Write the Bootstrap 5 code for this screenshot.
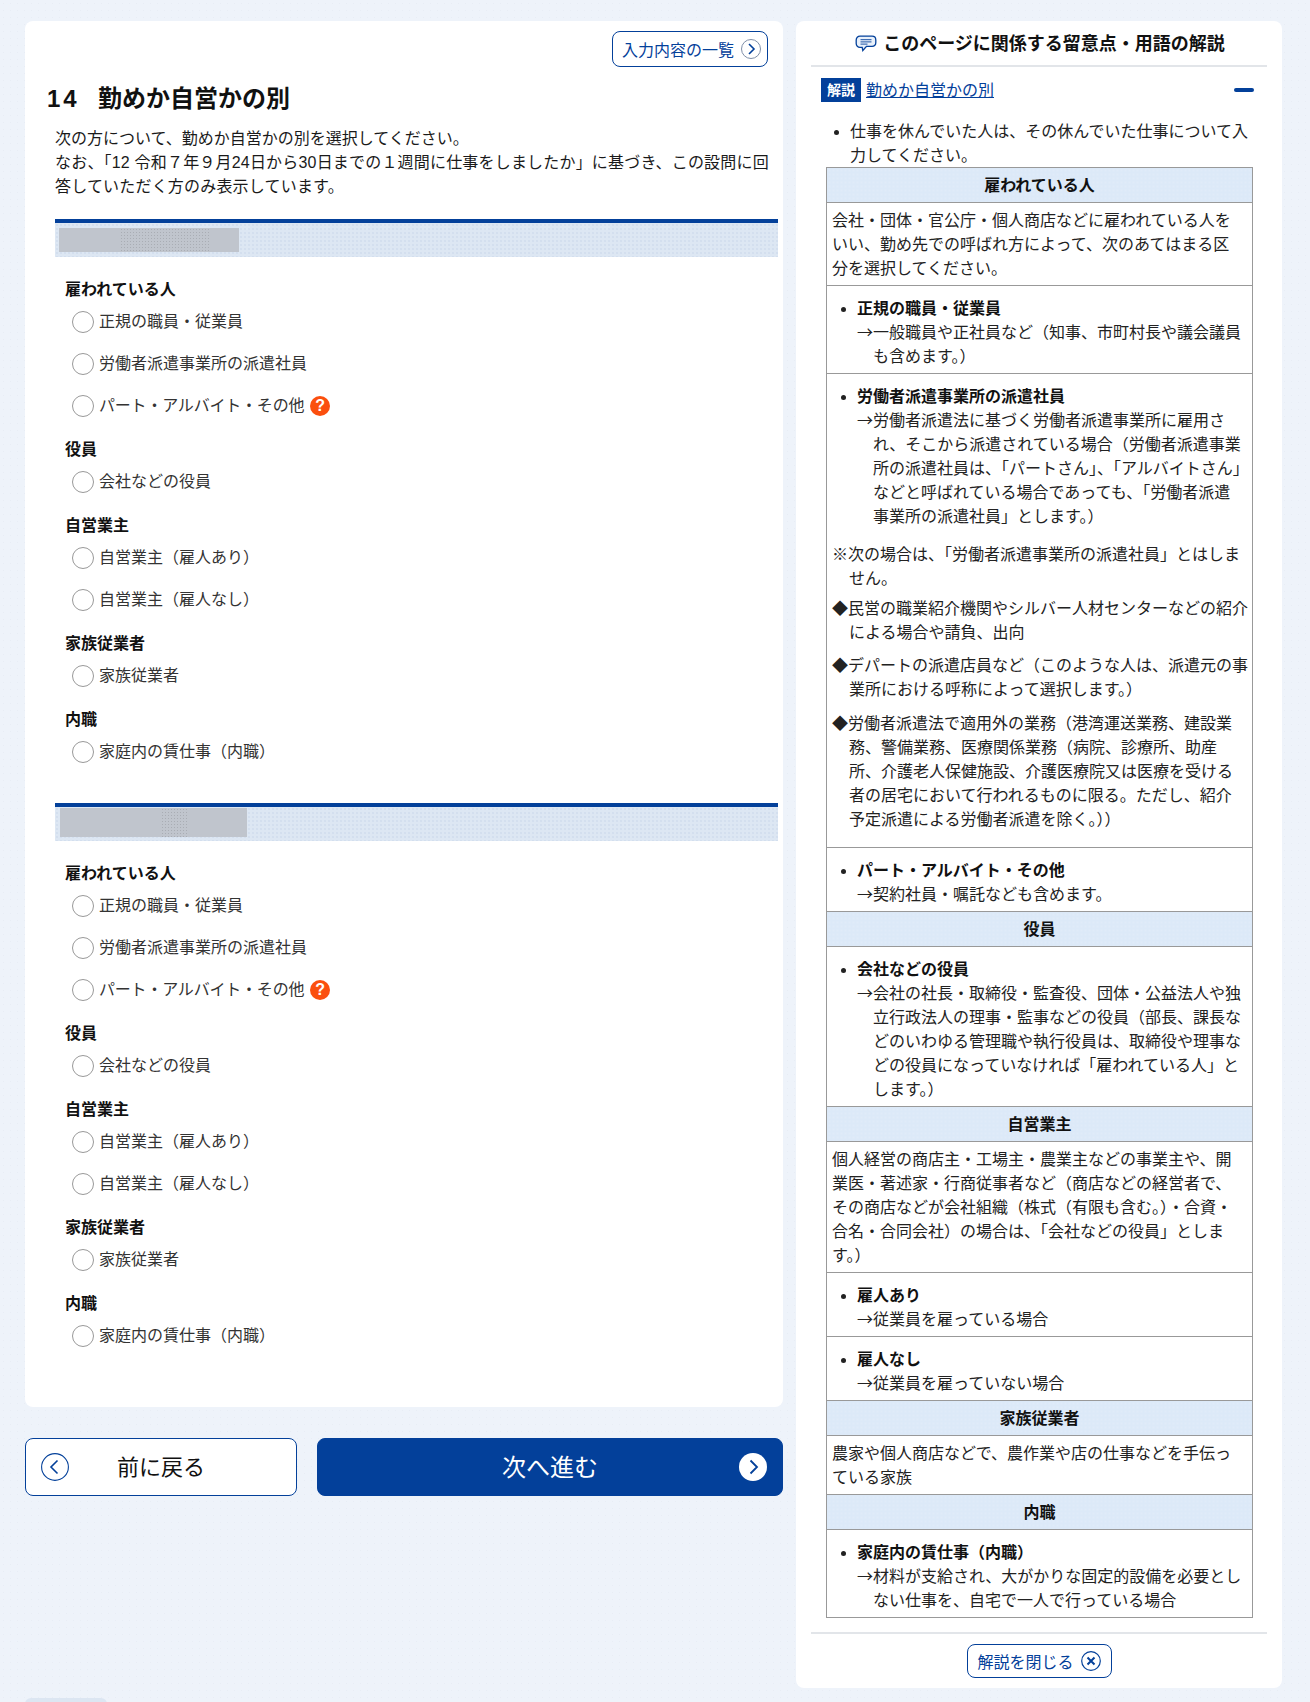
<!DOCTYPE html>
<html lang="ja">
<head>
<meta charset="utf-8">
<title>勤めか自営かの別</title>
<link href="https://cdn.jsdelivr.net/npm/bootstrap@5.3.0/dist/css/bootstrap.min.css" rel="stylesheet">
<style>
html,body{height:1702px;overflow:hidden}
body{font-family:"Liberation Sans","Noto Sans CJK JP",sans-serif;font-size:16px;line-height:24px;color:#1a1a1a;
 background-color:#eef3fa;background-image:radial-gradient(#e8edf5 .5px,transparent .7px);background-size:7px 7px}
.shell{padding:21px 28px 0 25px;gap:13px}
.left-col{width:758px;flex:none}
.right-col{width:486px;flex:none;border-radius:8px;padding:0 15px 10px}
.q-card{border-radius:8px;height:1386px;padding:10px 5px 0 30px}
.mini-btn{--bs-btn-padding-x:9px;--bs-btn-padding-y:0;--bs-btn-font-size:16px;--bs-btn-line-height:24px;--bs-btn-color:#03409a;--bs-btn-border-color:#03409a;--bs-btn-border-radius:8px;--bs-btn-hover-color:#03409a;--bs-btn-hover-bg:#fff;--bs-btn-hover-border-color:#03409a;background:#fff;display:inline-flex;align-items:center;gap:7px;white-space:nowrap}
.mini-btn svg{flex:none}
.mini-btn span{padding-top:3px}
.list-btn{height:36px;width:156px;margin-right:10px;padding:0 6px 0 9px}
.close-btn{height:34px;width:145px;padding:0 10px}
.q-title{font-size:24px;line-height:36px;font-weight:700;margin:14px 0 10px -8px;color:#111}
.q-title .q-no{display:inline-block;width:51px;letter-spacing:3px}
.q-lead-a{margin:0}
.q-lead-b{margin:0 0 20px;padding-right:3px;letter-spacing:.19px}
.sec-bar{height:38px;border-top:4px solid #03409a;background-color:#dde7f3;background-image:radial-gradient(#d3dfee .7px,transparent .9px);background-size:4px 4px;padding:5px 4px 0;display:flex}
.sec-bar.second-sec{padding-top:1px;padding-left:5px;margin-top:30px}
.redact{height:24px;display:block;background-color:#c0c5cd}
.second-sec .redact{height:29px}
.r2{background-image:radial-gradient(#a9adb4 .6px,transparent .8px);background-size:3px 3px}
.r3{background-image:radial-gradient(#d9dde3 .5px,transparent .7px);background-size:4px 4px}
.choice-block{padding:20px 0 0 10px}
.grp-label{font-weight:700;margin:0 0 -1px;padding-top:1px;color:#111}
.opt-row{height:42px;padding-left:7px;gap:5px;margin:0}
.opt-row+.grp-label{margin-top:10px}
.opt-radio.form-check-input{width:22px;height:22px;margin:0;flex:none;border:1px solid #999;background:#fff}
.opt-text{color:#333}
.tight{letter-spacing:-.2px}
.help-dot{width:20px;height:20px;border-radius:50%;background:#fb4f0e;color:#fff;font-weight:700;font-size:16px;line-height:20px;text-align:center;margin-left:1px;font-family:"Liberation Sans",sans-serif}
.nav-row{margin-top:31px;gap:20px}
.nav-btn{height:58px;border-radius:8px;border:1px solid #03409a;font-size:22px;display:flex;align-items:center;justify-content:center;position:relative;padding:0}
.nav-back{width:272px;background:#fff;color:#111}
.nav-next{flex:1;background:#03409a;color:#fff;font-size:24px;padding-top:2px}
.nav-back:hover{background:#fff;color:#111;border-color:#03409a}
.nav-next:hover{background:#03409a;color:#fff;border-color:#03409a}
.nav-ico{position:absolute;top:14px;width:28px;height:28px}
.nav-back .nav-ico{left:15px}
.nav-next .nav-ico{right:15px}
.exp-head{height:46px;border-bottom:2px solid #e2e5e9;font-size:18px;font-weight:700;gap:6px;color:#111;padding:2px 0 0 2px}
.exp-link-row{padding:11px 12px 0 10px;height:53px}
.exp-tag{width:40px;height:24px;background:#03409a;color:#fff;font-size:14px;font-weight:700;line-height:24px;text-align:center;flex:none}
.exp-link{color:#03409a;margin-left:5px;line-height:26px}
.exp-minus{width:20px;height:4px;border-radius:2px;background:#03409a;margin:10px 1px 0 auto}
.exp-note{margin:0 0 -1px;padding:0 15px 0 39px;color:#222}
.exp-table{width:427px;margin:0 0 0 15px;border-collapse:collapse;--bs-table-bg:transparent}
.exp-table th,.exp-table td{border:1px solid #999;font-weight:400;padding:6px 20px 4px 5px;color:#222;line-height:24px}
.exp-table th{background-color:#dce9f8;background-image:radial-gradient(#e3edf9 .6px,transparent .8px);background-size:4px 4px;text-align:center;font-weight:700;padding:6px 5px 4px;color:#111}
.cell-list{list-style:disc;margin:0;padding:0 0 0 25px}
.cell-list b{color:#111}
.hang{display:block;padding-left:16px;text-indent:-16px}
.arw{font-family:"Noto Sans CJK JP",sans-serif;line-height:0}
.exp-table td.list-cell{padding:11px 4px 4px 5px}
.hang-note{margin:0;padding-left:17px;text-indent:-17px}
.n0{margin-top:14px}.n1{margin-top:6px}.n2{margin-top:9px}.n3{margin-top:10px}
.exp-table td.long-cell{padding-bottom:15px}
.exp-foot{margin-top:14px;border-top:2px solid #e2e5e9;padding-top:10px;text-align:center}
.bottom-pill{width:82px;height:20px;margin:10px 0 0 25px;border-radius:6px;background:#dce6f2}
</style>
</head>
<body>
<div class="d-flex align-items-start shell">
 <main class="left-col">
  <section class="bg-white q-card">
   <div class="text-end"><a href="#" class="btn mini-btn list-btn"><span>入力内容の一覧</span><svg width="20" height="20" viewBox="0 0 20 20" fill="none"><circle cx="10" cy="10" r="9.500" stroke="#7f8fa8"/><path d="M8 5l5 5-5 5" stroke="#03409a" stroke-width="1.600"/></svg></a></div>
   <h1 class="q-title"><span class="q-no">14</span>勤めか自営かの別</h1>
   <p class="q-lead-a">次の方について、勤めか自営かの別を選択してください。</p>
   <p class="q-lead-b">なお、「12 令和７年９月24日から30日までの１週間に仕事をしましたか」に基づき、この設問に回答していただく方のみ表示しています。</p>

   <div class="sec-bar"><span class="redact" style="width:61px"></span><span class="redact r2" style="width:89px"></span><span class="redact r3" style="width:30px"></span></div>
   <div class="choice-block">
    <p class="grp-label">雇われている人</p>
    <label class="d-flex align-items-center opt-row"><input class="form-check-input opt-radio" type="radio" name="a"><span class="opt-text">正規の職員・従業員</span></label>
    <label class="d-flex align-items-center opt-row"><input class="form-check-input opt-radio" type="radio" name="a"><span class="opt-text">労働者派遣事業所の派遣社員</span></label>
    <label class="d-flex align-items-center opt-row"><input class="form-check-input opt-radio" type="radio" name="a"><span class="opt-text tight">パート・アルバイト・その他</span><span class="help-dot">?</span></label>
    <p class="grp-label">役員</p>
    <label class="d-flex align-items-center opt-row"><input class="form-check-input opt-radio" type="radio" name="a"><span class="opt-text">会社などの役員</span></label>
    <p class="grp-label">自営業主</p>
    <label class="d-flex align-items-center opt-row"><input class="form-check-input opt-radio" type="radio" name="a"><span class="opt-text">自営業主（雇人あり）</span></label>
    <label class="d-flex align-items-center opt-row"><input class="form-check-input opt-radio" type="radio" name="a"><span class="opt-text">自営業主（雇人なし）</span></label>
    <p class="grp-label">家族従業者</p>
    <label class="d-flex align-items-center opt-row"><input class="form-check-input opt-radio" type="radio" name="a"><span class="opt-text">家族従業者</span></label>
    <p class="grp-label">内職</p>
    <label class="d-flex align-items-center opt-row"><input class="form-check-input opt-radio" type="radio" name="a"><span class="opt-text">家庭内の賃仕事（内職）</span></label>
   </div>

   <div class="sec-bar second-sec"><span class="redact" style="width:33px"></span><span class="redact r3" style="width:68px"></span><span class="redact r2" style="width:28px"></span><span class="redact r3" style="width:58px"></span></div>
   <div class="choice-block">
    <p class="grp-label">雇われている人</p>
    <label class="d-flex align-items-center opt-row"><input class="form-check-input opt-radio" type="radio" name="b"><span class="opt-text">正規の職員・従業員</span></label>
    <label class="d-flex align-items-center opt-row"><input class="form-check-input opt-radio" type="radio" name="b"><span class="opt-text">労働者派遣事業所の派遣社員</span></label>
    <label class="d-flex align-items-center opt-row"><input class="form-check-input opt-radio" type="radio" name="b"><span class="opt-text tight">パート・アルバイト・その他</span><span class="help-dot">?</span></label>
    <p class="grp-label">役員</p>
    <label class="d-flex align-items-center opt-row"><input class="form-check-input opt-radio" type="radio" name="b"><span class="opt-text">会社などの役員</span></label>
    <p class="grp-label">自営業主</p>
    <label class="d-flex align-items-center opt-row"><input class="form-check-input opt-radio" type="radio" name="b"><span class="opt-text">自営業主（雇人あり）</span></label>
    <label class="d-flex align-items-center opt-row"><input class="form-check-input opt-radio" type="radio" name="b"><span class="opt-text">自営業主（雇人なし）</span></label>
    <p class="grp-label">家族従業者</p>
    <label class="d-flex align-items-center opt-row"><input class="form-check-input opt-radio" type="radio" name="b"><span class="opt-text">家族従業者</span></label>
    <p class="grp-label">内職</p>
    <label class="d-flex align-items-center opt-row"><input class="form-check-input opt-radio" type="radio" name="b"><span class="opt-text">家庭内の賃仕事（内職）</span></label>
   </div>
  </section>
  <div class="d-flex nav-row">
   <button type="button" class="btn nav-btn nav-back"><svg class="nav-ico" viewBox="0 0 28 28" fill="none"><circle cx="14" cy="14" r="13.400" stroke="#03409a" stroke-width="1.100"/><path d="M16.500 7.500L10 14l6.500 6.500" stroke="#03409a" stroke-width="1.600"/></svg>前に戻る</button>
   <button type="button" class="btn nav-btn nav-next">次へ進む<svg class="nav-ico" viewBox="0 0 28 28" fill="none"><circle cx="14" cy="14" r="14" fill="#fff"/><path d="M11.500 7.500L18 14l-6.500 6.500" stroke="#03409a" stroke-width="1.800"/></svg></button>
  </div>
 </main>

 <aside class="right-col bg-white">
  <div class="d-flex align-items-center justify-content-center exp-head">
   <svg width="22" height="18" viewBox="0 0 22 18" fill="none"><path d="M5 1.200h12c2.200 0 3.800 1.600 3.800 3.800v2.500c0 2.200-1.600 3.800-3.800 3.800h-5.500L7.800 15.500l-.6-3.200H5c-2.200 0-3.800-1.600-3.800-3.800V5C1.200 2.800 2.800 1.200 5 1.200z" fill="#e9f1fb" stroke="#03409a" stroke-width="1.300"/><path d="M5.500 4.700h11M5.500 6.900h11M5.500 9.100h7" stroke="#03409a" stroke-width=".9"/></svg>
   <span>このページに関係する留意点・用語の解説</span>
  </div>
  <div class="d-flex align-items-start exp-link-row">
   <span class="exp-tag">解説</span><a href="#" class="exp-link">勤めか自営かの別</a><span class="exp-minus"></span>
  </div>
  <ul class="exp-note">
   <li>仕事を休んでいた人は、その休んでいた仕事について入力してください。</li>
  </ul>
  <table class="table table-bordered exp-table">
   <tbody>
   <tr><th>雇われている人</th></tr>
   <tr><td>会社・団体・官公庁・個人商店などに雇われている人をいい、勤め先での呼ばれ方によって、次のあてはまる区分を選択してください。</td></tr>
   <tr><td class="list-cell"><ul class="cell-list"><li><b>正規の職員・従業員</b><span class="hang"><span class="arw">→</span>一般職員や正社員など（知事、市町村長や議会議員も含めます。）</span></li></ul></td></tr>
   <tr><td class="list-cell long-cell"><ul class="cell-list"><li><b>労働者派遣事業所の派遣社員</b><span class="hang"><span class="arw">→</span>労働者派遣法に基づく労働者派遣事業所に雇用され、そこから派遣されている場合（労働者派遣事業所の派遣社員は、「パートさん」、「アルバイトさん」などと呼ばれている場合であっても、「労働者派遣<br>事業所の派遣社員」とします。）</span></li></ul>
     <p class="hang-note n0">※次の場合は、「労働者派遣事業所の派遣社員」とはしません。</p>
     <p class="hang-note n1">◆民営の職業紹介機関やシルバー人材センターなどの紹介による場合や請負、出向</p>
     <p class="hang-note n2">◆デパートの派遣店員など（このような人は、派遣元の事業所における呼称によって選択します。）</p>
     <p class="hang-note n3 mb-0">◆労働者派遣法で適用外の業務（港湾運送業務、建設業務、警備業務、医療関係業務（病院、診療所、助産所、介護老人保健施設、介護医療院又は医療を受ける者の居宅において行われるものに限る。ただし、紹介<br>予定派遣による労働者派遣を除く。））</p></td></tr>
   <tr><td class="list-cell"><ul class="cell-list"><li><b>パート・アルバイト・その他</b><span class="hang"><span class="arw">→</span>契約社員・嘱託なども含めます。</span></li></ul></td></tr>
   <tr><th>役員</th></tr>
   <tr><td class="list-cell"><ul class="cell-list"><li><b>会社などの役員</b><span class="hang"><span class="arw">→</span>会社の社長・取締役・監査役、団体・公益法人や独立行政法人の理事・監事などの役員（部長、課長などのいわゆる管理職や執行役員は、取締役や理事などの役員になっていなければ「雇われている人」とします。）</span></li></ul></td></tr>
   <tr><th>自営業主</th></tr>
   <tr><td>個人経営の商店主・工場主・農業主などの事業主や、開業医・著述家・行商従事者など（商店などの経営者で、その商店などが会社組織（株式（有限も含む。）・合資・合名・合同会社）の場合は、「会社などの役員」とします。）</td></tr>
   <tr><td class="list-cell"><ul class="cell-list"><li><b>雇人あり</b><span class="hang"><span class="arw">→</span>従業員を雇っている場合</span></li></ul></td></tr>
   <tr><td class="list-cell"><ul class="cell-list"><li><b>雇人なし</b><span class="hang"><span class="arw">→</span>従業員を雇っていない場合</span></li></ul></td></tr>
   <tr><th>家族従業者</th></tr>
   <tr><td>農家や個人商店などで、農作業や店の仕事などを手伝っている家族</td></tr>
   <tr><th>内職</th></tr>
   <tr><td class="list-cell"><ul class="cell-list"><li><b>家庭内の賃仕事（内職）</b><span class="hang"><span class="arw">→</span>材料が支給され、大がかりな固定的設備を必要としない仕事を、自宅で一人で行っている場合</span></li></ul></td></tr>
   </tbody>
  </table>
  <div class="exp-foot"><a href="#" class="btn mini-btn close-btn"><span>解説を閉じる</span><svg width="20" height="20" viewBox="0 0 20 20" fill="none"><circle cx="10" cy="10" r="9.300" stroke="#03409a" stroke-width="1.200"/><path d="M6.500 6.500l7 7M13.500 6.500l-7 7" stroke="#03409a" stroke-width="2"/></svg></a></div>
 </aside>
</div>
<div class="bottom-pill"></div>
<script src="https://cdn.jsdelivr.net/npm/bootstrap@5.3.0/dist/js/bootstrap.bundle.min.js"></script>
</body>
</html>
